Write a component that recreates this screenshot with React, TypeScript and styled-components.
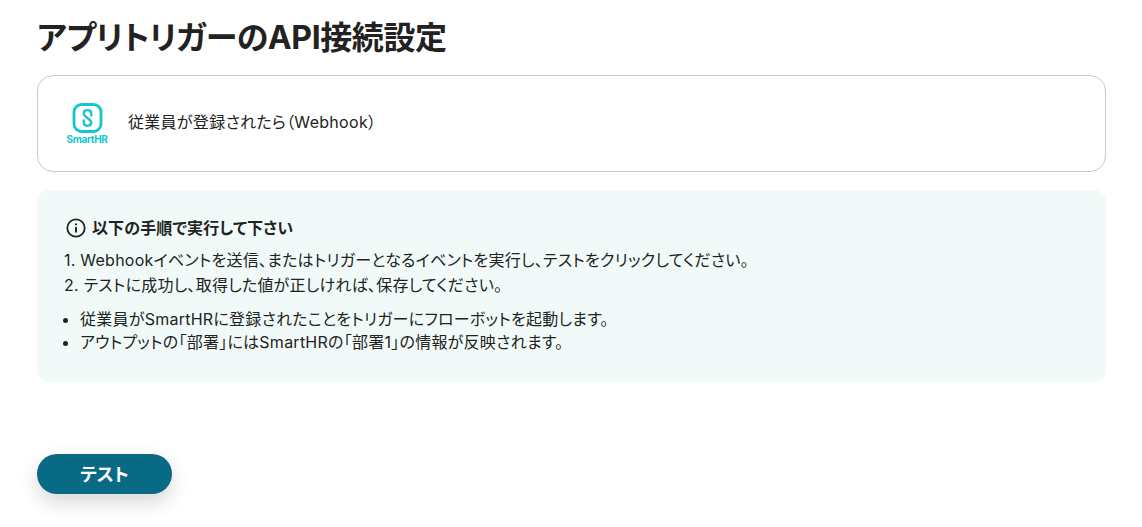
import React from "react";
import styled, { createGlobalStyle } from "styled-components";

const Global = createGlobalStyle`
  html, body { margin: 0; padding: 0; background: #fff; }
  body { font-family: Inter, "Noto Sans CJK JP", sans-serif; color: #222; font-feature-settings: "palt"; }
`;
const Page = styled.div`
  width: 1142px; height: 527px; box-sizing: border-box; padding: 17px 36px 0 37px; overflow: hidden;
`;
const Title = styled.h1`
  margin: 0 0 16px; font-size: 32px; line-height: 42px; font-weight: 700; color: #222; white-space: nowrap; letter-spacing: -0.4px;
`;
const AppCard = styled.div`
  height: 97px; box-sizing: border-box; border: 1px solid #c9c9c9; border-radius: 16px;
  display: flex; align-items: center; padding: 0 28px 0 27px; gap: 19px; margin-bottom: 18px;
`;
const Logo = styled.div`
  width: 44px; display: flex; flex-direction: column; align-items: center; gap: 1px; padding-top: 1px;
`;
const LogoName = styled.span`
  font-size: 10px; line-height: 11px; font-weight: 700; color: #12c6d0; letter-spacing: -0.35px; white-space: nowrap;
`;
const AppName = styled.span`
  font-size: 16px; line-height: 22px; color: #222; margin-top: -4px; letter-spacing: 0.3px;
`;
const Notice = styled.div`
  height: 192px; box-sizing: border-box; background: #f1faf8; border-radius: 12px; padding: 26px 27px 0;
`;
const NoticeHead = styled.div`
  display: flex; align-items: center; gap: 5px; margin: 0 0 8px 1px; font-size: 16px; line-height: 24px; font-weight: 700; letter-spacing: 0.12px;
`;
const Steps = styled.ol`
  margin: 0 0 10px; padding: 0; list-style: none; font-size: 16px; line-height: 25px; letter-spacing: 0.24px;
`;
const Bullets = styled.ul`
  margin: 0; padding: 0 0 0 16px; font-size: 16px; line-height: 23px; letter-spacing: 0.25px;
`;
const TestButton = styled.button`
  display: block; margin-top: 72px; width: 135px; height: 40px; border: none; border-radius: 20px; padding: 0 0 2px;
  background: #086a84; color: #fff; font: 700 18px Inter, "Noto Sans CJK JP", sans-serif; font-feature-settings: "palt";
  box-shadow: 0 8px 20px rgba(0,0,0,.16);
`;

export default function App() {
  return (
    <Page>
      <Global />
      <Title>アプリトリガーのAPI接続設定</Title>
      <AppCard>
        <Logo>
          <svg width="31" height="30" viewBox="0 0 30 30" fill="none">
            <rect x="1.5" y="1.5" width="27" height="27" rx="7.500" stroke="#12c6d0" strokeWidth="2.800" />
            <path d="M18.800 12.500V10.400c0-4.300-7.600-4.300-7.600 0 0 3.300 7.600 5.900 7.600 9.200 0 4.300-7.600 4.300-7.600 0V17.500" stroke="#12c6d0" strokeWidth="2.300" strokeLinecap="round" />
          </svg>
          <LogoName>SmartHR</LogoName>
        </Logo>
        <AppName>従業員が登録されたら（Webhook）</AppName>
      </AppCard>
      <Notice>
        <NoticeHead>
          <svg width="22" height="22" viewBox="0 0 22 22" fill="none" stroke="#222">
            <circle cx="11" cy="11" r="8.700" strokeWidth="1.800" />
            <path d="M11 10v5.500" strokeWidth="2" />
            <path d="M11 6.500v1.800" strokeWidth="2" />
          </svg>
          以下の手順で実行して下さい
        </NoticeHead>
        <Steps>
          <li>1. Webhookイベントを送信、またはトリガーとなるイベントを実行し、テストをクリックしてください。</li>
          <li>2. テストに成功し、取得した値が正しければ、保存してください。</li>
        </Steps>
        <Bullets>
          <li>従業員がSmartHRに登録されたことをトリガーにフローボットを起動します。</li>
          <li>アウトプットの「部署」にはSmartHRの「部署1」の情報が反映されます。</li>
        </Bullets>
      </Notice>
      <TestButton>テスト</TestButton>
    </Page>
  );
}
